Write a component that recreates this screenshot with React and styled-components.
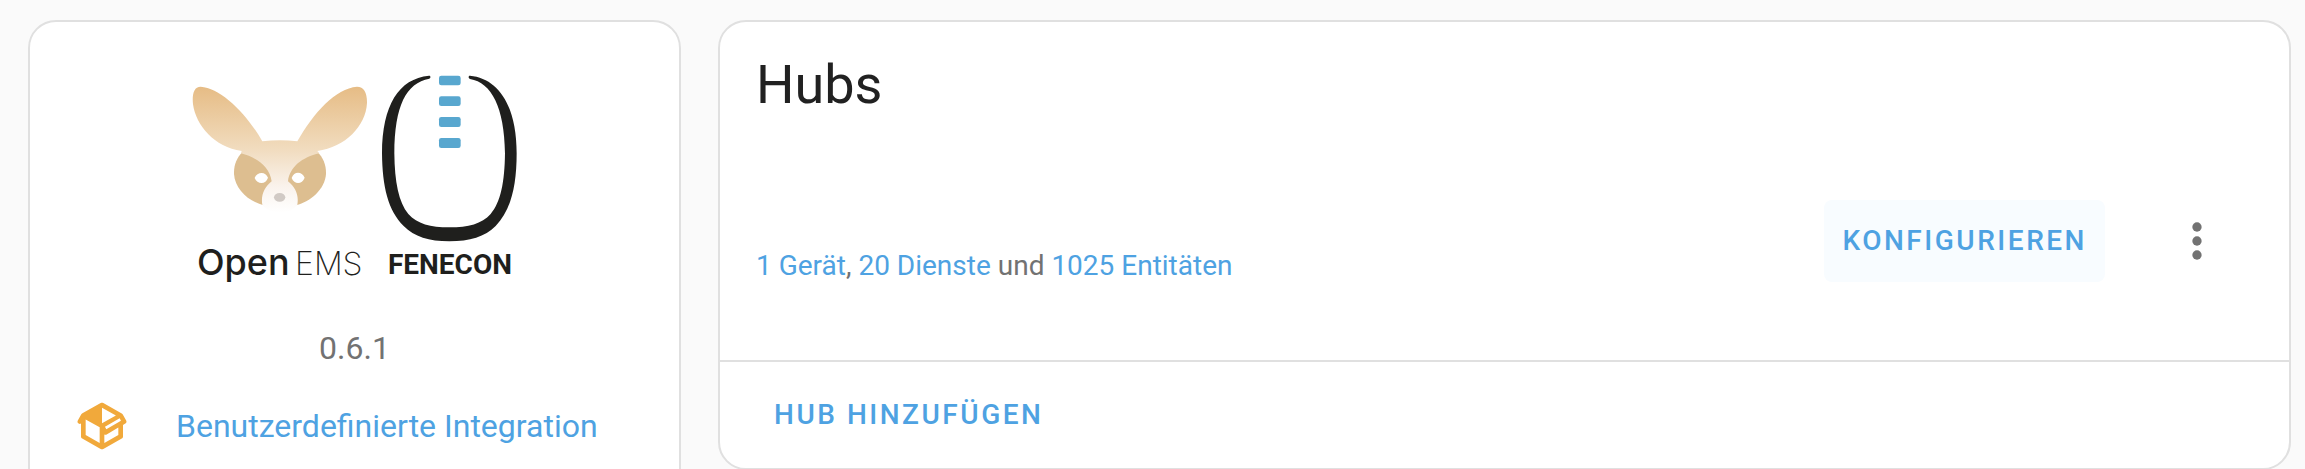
import React from "react";
import styled, { createGlobalStyle } from "styled-components";

const GlobalStyle = createGlobalStyle`
  * { box-sizing: border-box; }
  body {
    margin: 0;
    background: #fafafa;
    color: #212121;
    font-family: Roboto, "Liberation Sans", sans-serif;
    -webkit-font-smoothing: antialiased;
  }
`;

const Page = styled.main`
  display: grid;
  grid-template-columns: minmax(0, 653fr) minmax(0, 1573fr);
  align-items: start;
  gap: 37px;
  height: 100vh;
  padding: 20px 14px 0 28px;
  overflow: hidden;
`;

const Card = styled.section`
  background: #fff;
  border: 2px solid #e0e0e0;
  border-radius: 28px;
`;

const InfoCard = styled(Card)`
  display: flex;
  flex-direction: column;
  padding: 48px 44px 80px;
`;

const Brand = styled.svg`
  display: block;
  align-self: center;
  width: 350px;
  height: 220px;
`;

const Version = styled.p`
  margin: 36px 0 0;
  color: #727272;
  font-size: 32px;
  line-height: 44px;
  text-align: center;
`;

const TextLink = styled.a`
  color: #4ea2e2;
  text-decoration: none;
`;

const InfoLink = styled(TextLink)`
  display: flex;
  align-items: center;
  gap: 46px;
  margin-top: 28px;
  font-size: 32px;
  line-height: 56px;
  white-space: nowrap;
`;

const PackageIcon = styled.svg`
  flex: none;
  width: 56px;
  height: 56px;
  fill: #f1a93b;
`;

const Title = styled.h1`
  margin: 0;
  padding: 28px 36px 0;
  font-size: 54px;
  font-weight: 400;
  line-height: 70px;
`;

const HubRow = styled.div`
  display: flex;
  align-items: center;
  padding: 79px 56px 77px 36px;
`;

const Summary = styled.p`
  flex: 1;
  margin: 50px 0 0;
  color: #727272;
  font-size: 28px;
  line-height: 34px;
`;

const ActionButton = styled.button`
  height: ${(p) => (p.$tonal ? 82 : 72)}px;
  padding: 0 18px;
  border: 0;
  border-radius: 8px;
  background: ${(p) => (p.$tonal ? "#f8fcff" : "transparent")};
  color: #4ea2e2;
  font: 500 28px/34px Roboto, "Liberation Sans", sans-serif;
  letter-spacing: 0.09em;
  text-transform: uppercase;
  cursor: pointer;
`;

const MenuButton = styled.button`
  display: grid;
  place-items: center;
  width: 72px;
  height: 72px;
  margin-left: 56px;
  padding: 0;
  border: 0;
  background: transparent;
  cursor: pointer;

  svg { width: 56px; height: 56px; fill: #727272; }
`;

const CardActions = styled.footer`
  padding: 17px 36px;
  border-top: 2px solid #e0e0e0;
`;

function BrandLogo() {
  return (
    <Brand viewBox="0 0 350 220" role="img" aria-label="OpenEMS FENECON">
      <defs>
        <linearGradient id="fur" x1="0" y1="50" x2="0" y2="428" gradientUnits="userSpaceOnUse">
          <stop offset="0" stopColor="#e6bc85" />
          <stop offset="0.5" stopColor="#f1dcbf" />
          <stop offset="0.8" stopColor="#faf3ed" />
          <stop offset="1" stopColor="#ffffff" />
        </linearGradient>
      </defs>
      <g transform="scale(.3333)">
        <path fill="#ddbe90" d="M188 246C170 263 161 286 162 312C165 358 206 394 250 406H348C392 394 435 358 438 312C439 286 430 263 412 246Z" />
        <path fill="url(#fur)" d="M62 50C41 50 36 74 39 103C48 166 103 232 185 243L183 250C230 262 269 290 275 334C253 352 242 376 247 404C266 434 335 434 352 404C357 376 347 352 324 334C329 291 366 262 418 250L412 243C497 232 557 168 561 100C562 69 552 50 531 50C467 55 400 129 352 214Q300 208 247 214C199 129 122 54 62 50Z" />
        <path fill="#fff" d="M224 324C231 305 257 303 264 323C258 344 232 344 224 324ZM335 324C342 303 366 304 374 323C367 344 343 345 335 324Z" />
        <ellipse cx="299" cy="382" rx="17" ry="13" fill="#d1cac5" />
      </g>
      <g transform="translate(190 -20) scale(.3333)">
        <path fill="#1f1f1d" d="M177 77C86 86 37 165 36 310C37 410 54 482 101 528C133 560 177 574 238 574C299 574 345 560 377 528C422 482 440 410 440 310C440 165 384 85 300 77C295 76 294 85 300 87C365 98 403 172 405 310C404 397 392 457 362 492C335 522 296 532 238 532C181 532 142 522 115 492C86 457 74 397 73 310C74 167 108 99 178 86C183 84 182 76 177 77Z" />
        <g fill="#58a7cf">
          <rect x="207" y="77" width="65" height="29" rx="7" />
          <rect x="207" y="139" width="65" height="29" rx="7" />
          <rect x="207" y="201" width="65" height="30" rx="7" />
          <rect x="207" y="264" width="65" height="30" rx="7" />
        </g>
      </g>
      <g fill="#1f1f1d">
        <text x="17" y="205" fontFamily="Inter, sans-serif" fontSize="36" fontWeight="500">Open</text>
        <text x="115" y="205" fontFamily="Inter, sans-serif" fontSize="32" fontWeight="200">EMS</text>
        <text x="208" y="204" fontFamily="Roboto, sans-serif" fontSize="28" fontWeight="700">FENECON</text>
      </g>
    </Brand>
  );
}

export default function App() {
  return (
    <>
      <GlobalStyle />
      <Page>
        <InfoCard>
          <BrandLogo />
          <Version>0.6.1</Version>
          <InfoLink href="#integration">
            <PackageIcon viewBox="0 0 24 24" aria-hidden="true">
              <path d="M2,10.96C1.5,10.68 1.35,10.07 1.63,9.59L3.13,7C3.24,6.8 3.41,6.66 3.6,6.58L11.43,2.18C11.59,2.06 11.79,2 12,2C12.21,2 12.41,2.06 12.57,2.18L20.47,6.62C20.66,6.72 20.82,6.88 20.91,7.08L22.36,9.6C22.64,10.08 22.47,10.69 22,10.96L21,11.54V16.5C21,16.88 20.79,17.21 20.47,17.38L12.57,21.82C12.41,21.94 12.21,22 12,22C11.79,22 11.59,21.94 11.43,21.82L3.53,17.38C3.21,17.21 3,16.88 3,16.5V10.96C2.7,11.13 2.32,11.14 2,10.96M12,4.15V4.15L12,10.85V10.85L17.96,7.5L12,4.15M5,15.91L11,19.29V12.58L5,9.21V15.91M19,15.91V12.69L14,15.59C13.67,15.77 13.3,15.76 13,15.6V19.29L19,15.91M13.85,13.36L20.13,9.73L19.55,8.72L13.27,12.35L13.85,13.36Z" />
            </PackageIcon>
            Benutzerdefinierte Integration
          </InfoLink>
        </InfoCard>

        <Card>
          <Title>Hubs</Title>
          <HubRow>
            <Summary>
              <TextLink href="#devices">1 Gerät</TextLink>, <TextLink href="#services">20 Dienste</TextLink> und{" "}
              <TextLink href="#entities">1025 Entitäten</TextLink>
            </Summary>
            <ActionButton type="button" $tonal>Konfigurieren</ActionButton>
            <MenuButton type="button" aria-label="Menü">
              <svg viewBox="0 0 24 24" aria-hidden="true">
                <circle cx="12" cy="6" r="2" />
                <circle cx="12" cy="12" r="2" />
                <circle cx="12" cy="18" r="2" />
              </svg>
            </MenuButton>
          </HubRow>
          <CardActions>
            <ActionButton type="button">Hub hinzufügen</ActionButton>
          </CardActions>
        </Card>
      </Page>
    </>
  );
}
